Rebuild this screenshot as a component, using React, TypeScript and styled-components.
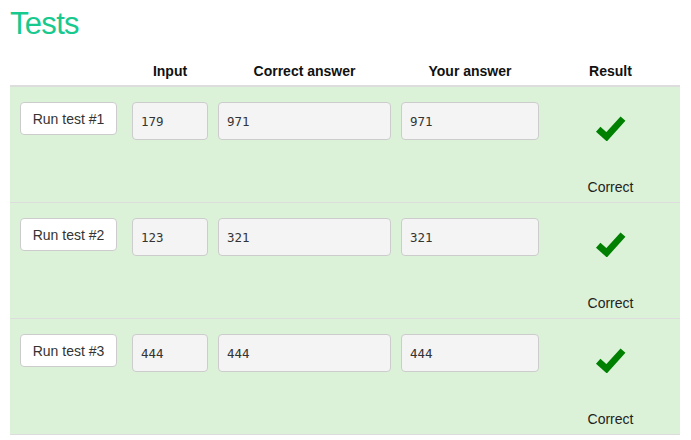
import React from "react";
import styled, { createGlobalStyle } from "styled-components";

const GlobalStyle = createGlobalStyle`
  html, body {
    margin: 0;
    padding: 0;
    background: #ffffff;
  }
  body {
    font-family: "Liberation Sans", Arial, Helvetica, sans-serif;
    color: #222;
  }
`;

const Page = styled.div`
  padding: 0 11px 0 10px;
  width: 670px;
`;

const Title = styled.h1`
  margin: 0;
  padding-top: 6px;
  font-size: 31px;
  line-height: 36px;
  font-weight: 400;
  letter-spacing: -0.7px;
  color: #18c98e;
`;

const Grid = styled.div`
  display: grid;
  grid-template-columns: 102px 76px 173px 138px 1fr;
  column-gap: 10px;
  padding-left: 10px;
  padding-right: 8px;
  box-sizing: border-box;
`;

const HeaderRow = styled(Grid)`
  padding-top: 21px;
  padding-bottom: 5px;
  border-bottom: 2px solid #dddddd;
`;

const HeaderCell = styled.div<{ $align?: string }>`
  font-size: 14px;
  line-height: 17px;
  font-weight: 700;
  color: #111;
  text-align: ${(p) => p.$align || "center"};
`;

const Row = styled(Grid)`
  height: 116px;
  padding-top: 15px;
  align-items: start;
  background: #dbf2d9;
  border-bottom: 1px solid #dddddd;
`;

const RunButton = styled.button`
  box-sizing: border-box;
  height: 33px;
  width: 97px;
  padding: 0;
  background: #ffffff;
  border: 1px solid #cccccc;
  border-radius: 4px;
  font-family: "Liberation Sans", Arial, Helvetica, sans-serif;
  font-size: 14px;
  color: #333;
  cursor: pointer;
`;

const Field = styled.input`
  box-sizing: border-box;
  width: 100%;
  height: 38px;
  padding: 0 8px;
  margin: 0;
  background: #f4f4f4;
  border: 1px solid #cccccc;
  border-radius: 4px;
  font-family: "DejaVu Sans Mono", Menlo, monospace;
  font-size: 12.5px;
  color: #333;
  outline: none;
`;

const ResultCell = styled.div`
  display: flex;
  flex-direction: column;
  align-items: center;
`;

const CheckSvg = styled.svg`
  display: block;
  margin-top: 13px;
  width: 31px;
  height: 26px;
`;

const ResultText = styled.div`
  margin-top: 38px;
  font-size: 14px;
  line-height: 17px;
  color: #222;
`;

const CheckMark = () => (
  <CheckSvg viewBox="0 0 31 26" aria-hidden="true">
    <polyline
      points="3.2,14.2 11.6,21.8 28,3.6"
      fill="none"
      stroke="#008000"
      strokeWidth="6.6"
      strokeLinecap="butt"
      strokeLinejoin="miter"
      strokeMiterlimit="2"
    />
  </CheckSvg>
);

type Test = { input: string; correct: string; yours: string };

const tests: Test[] = [
  { input: "179", correct: "971", yours: "971" },
  { input: "123", correct: "321", yours: "321" },
  { input: "444", correct: "444", yours: "444" },
];

export default function App() {
  return (
    <>
      <GlobalStyle />
      <Page>
        <Title>Tests</Title>
        <HeaderRow>
          <HeaderCell />
          <HeaderCell>Input</HeaderCell>
          <HeaderCell>Correct answer</HeaderCell>
          <HeaderCell>Your answer</HeaderCell>
          <HeaderCell>Result</HeaderCell>
        </HeaderRow>
        {tests.map((t, i) => (
          <Row key={i}>
            <RunButton>Run test #{i + 1}</RunButton>
            <Field readOnly value={t.input} />
            <Field readOnly value={t.correct} />
            <Field readOnly value={t.yours} />
            <ResultCell>
              <CheckMark />
              <ResultText>Correct</ResultText>
            </ResultCell>
          </Row>
        ))}
      </Page>
    </>
  );
}
